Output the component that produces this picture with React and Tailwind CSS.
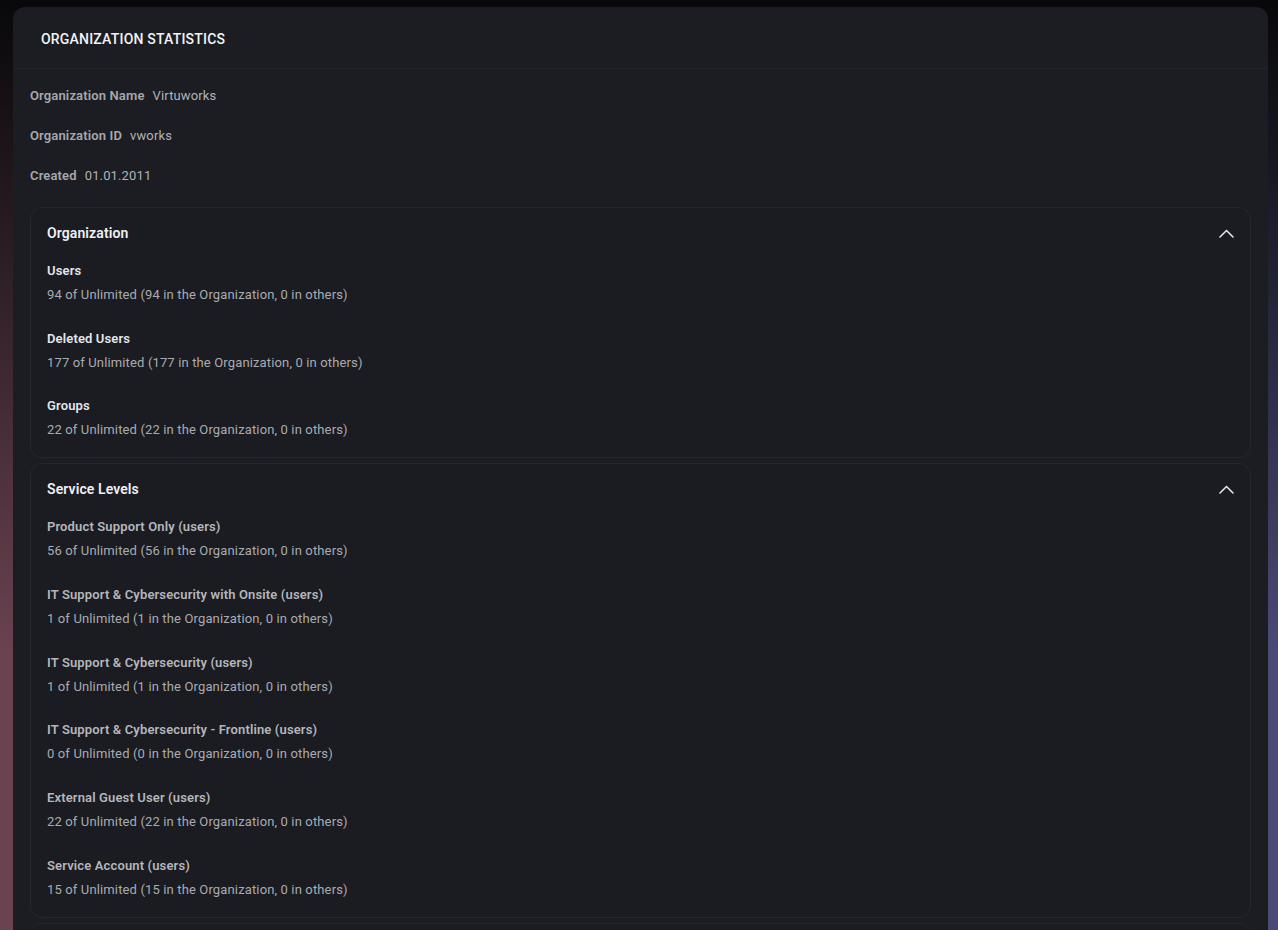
import React from "react";

const info = [
  { label: "Organization Name", value: "Virtuworks" },
  { label: "Organization ID", value: "vworks" },
  { label: "Created", value: "01.01.2011" },
];

const sections = [
  {
    title: "Organization",
    strong: true,
    items: [
      { label: "Users", value: "94 of Unlimited (94 in the Organization, 0 in others)" },
      { label: "Deleted Users", value: "177 of Unlimited (177 in the Organization, 0 in others)" },
      { label: "Groups", value: "22 of Unlimited (22 in the Organization, 0 in others)" },
    ],
  },
  {
    title: "Service Levels",
    strong: false,
    items: [
      { label: "Product Support Only (users)", value: "56 of Unlimited (56 in the Organization, 0 in others)" },
      { label: "IT Support & Cybersecurity with Onsite (users)", value: "1 of Unlimited (1 in the Organization, 0 in others)" },
      { label: "IT Support & Cybersecurity (users)", value: "1 of Unlimited (1 in the Organization, 0 in others)" },
      { label: "IT Support & Cybersecurity - Frontline (users)", value: "0 of Unlimited (0 in the Organization, 0 in others)" },
      { label: "External Guest User (users)", value: "22 of Unlimited (22 in the Organization, 0 in others)" },
      { label: "Service Account (users)", value: "15 of Unlimited (15 in the Organization, 0 in others)" },
    ],
  },
];

function Chevron() {
  return (
    <svg width="15" height="9" viewBox="0 0 15 9" fill="none" className="text-[#e8eaf0]">
      <polyline points="1,8 7.5,1.5 14,8" stroke="currentColor" strokeWidth="1.5" strokeLinecap="round" strokeLinejoin="round" />
    </svg>
  );
}

function Section({ s }) {
  return (
    <div className="rounded-xl border border-[#26272d] bg-[#1b1c21] px-[16px] pt-[15px] pb-[17px]">
      <div className="flex items-center justify-between">
        <div className="text-[14px] font-semibold leading-5 tracking-[0.1px] text-[#eef0f4]">{s.title}</div>
        <Chevron />
      </div>
      <div className="mt-[18px] flex flex-col gap-[23.7px]">
        {s.items.map((it) => (
          <div key={it.label} className="flex flex-col gap-1">
            <div
              className={
                s.strong
                  ? "text-[13px] font-semibold leading-5 tracking-[0.14px] text-[#e3e6ec]"
                  : "text-[13px] font-semibold leading-5 tracking-[0.14px] text-[#b4b6bb]"
              }
            >
              {it.label}
            </div>
            <div className="text-[13px] leading-5 tracking-[0.14px] text-[#a9abb1]">{it.value}</div>
          </div>
        ))}
      </div>
    </div>
  );
}

export default function App() {
  return (
    <div
      className="h-[930px] overflow-hidden bg-[linear-gradient(180deg,rgba(8,8,10,1)_0%,rgba(8,8,10,0.6)_30%,rgba(8,8,10,0)_70%),linear-gradient(90deg,#6a4250_0%,#4a4a78_100%)] pt-[7px] pl-[13px] pr-[10px]"
      style={{ fontFamily: "Roboto, 'Noto Sans', sans-serif" }}
    >
      <div className="min-h-[1000px] rounded-xl bg-[#1c1d22]">
        <div className="flex h-[62px] items-center border-b border-[#222329] px-[28px] pt-[3px]">
          <div className="text-[14px] font-medium uppercase tracking-[0.2px] text-[#f2f3f6]">
            Organization Statistics
          </div>
        </div>
        <div className="px-[17px] pt-[17px]">
          <div className="flex flex-col gap-5">
            {info.map((r) => (
              <div key={r.label} className="flex gap-2 text-[13px] leading-5 tracking-[0.14px]">
                <span className="font-semibold text-[#a6a8ad]">{r.label}</span>
                <span className="text-[#b0b2b7]">{r.value}</span>
              </div>
            ))}
          </div>
          <div className="mt-[21px] flex flex-col gap-[5px]">
            {sections.map((s) => (
              <Section key={s.title} s={s} />
            ))}
            {/* next panel, only its top edge shows */}
            <div className="h-[60px] rounded-xl border border-[#26272d] bg-[#1b1c21]" />
          </div>
        </div>
      </div>
    </div>
  );
}
